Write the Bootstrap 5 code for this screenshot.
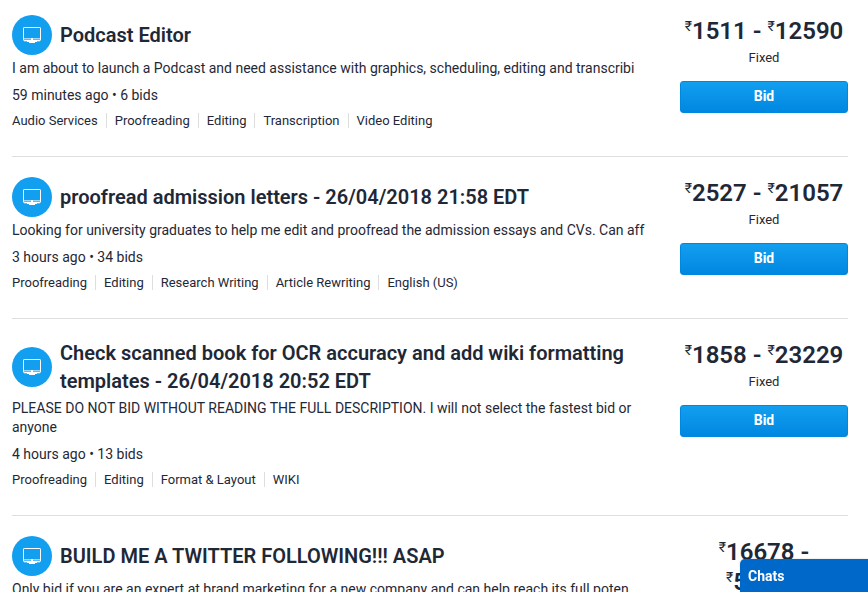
<!DOCTYPE html>
<html lang="en">
<head>
<meta charset="utf-8">
<meta name="viewport" content="width=device-width, initial-scale=1">
<title>Projects</title>
<link href="https://cdn.jsdelivr.net/npm/bootstrap@5.3.0/dist/css/bootstrap.min.css" rel="stylesheet">
<style>
body { font-family: Roboto, sans-serif; font-size: 14px; line-height: 19px; color: #1f2836; background: #fff; }
.project-list { padding: 0 20px 0 12px; margin-top: -5px; }
.project { padding: 20px 0 26px; border-bottom: 1px solid #dedede; }
.project-head { min-height: 40px; gap: 8px; margin-bottom: 4px; }
.project-icon { width: 40px; height: 40px; background: #139ff0; }
.project-title { font-size: 20px; line-height: 28px; font-weight: 600; }
.project-meta { margin: 8px 0 6px; }
.project-tags { font-size: 13px; row-gap: 4px; }
.project-tags li { line-height: 15px; margin: 2px 0; }
.project-tags li + li { border-left: 1px solid #dedede; margin-left: 8px; padding-left: 8px; }
.project-side { width: 168px; }
.project-price { font-size: 24px; line-height: 30px; font-weight: 600; margin: 1px 0 2px; }
.project-price sup { font-size: 14px; line-height: 0; top: -8px; font-weight: 400; }
.project-kind { font-size: 13px; margin-bottom: 14px; }
.btn-bid { height: 32px; padding: 0 0 2px; font-size: 14px; line-height: 20px; font-weight: 700; color: #fff; border: 1px solid #0087e0; border-radius: 3px; background: linear-gradient(#139ff0, #0087e0); }
.btn-bid:hover { color: #fff; background: #0087e0; }
.chat-bar { width: 128px; height: 33px; padding: 1px 8px 0; border: 0; border-radius: 5px 0 0 0; background: #0068c9; color: #fff; font-weight: 700; box-shadow: 0 0 2px rgba(0, 0, 0, .2); }
</style>
</head>
<body>
<svg class="d-none" xmlns="http://www.w3.org/2000/svg">
  <symbol id="monitor" viewBox="0 0 18 16">
    <rect x=".5" y=".5" width="17" height="13" rx=".6" fill="none" stroke="#fff"/>
    <path d="M1 11h16v1H1z" fill="#fff" opacity=".6"/>
    <path d="M1 12h16v1H1zM1 14h16v1H1z" fill="#fff" opacity=".3"/>
    <path d="M8 11h2v3H8zM4 14h10v1H4zM6 15h6v1H6z" fill="#fff"/>
  </symbol>
</svg>
<div class="vh-100 overflow-hidden">
<main class="overflow-hidden">
<div class="project-list">
  <article class="project d-flex justify-content-between">
    <div class="flex-grow-1 pe-4">
      <div class="project-head d-flex align-items-center">
        <span class="project-icon rounded-circle d-flex align-items-center justify-content-center flex-shrink-0"><svg width="18" height="16" aria-hidden="true"><use href="#monitor"/></svg></span>
        <h2 class="project-title mb-0">Podcast Editor</h2>
      </div>
      <p class="mb-0">I am about to launch a Podcast and need assistance with graphics, scheduling, editing and transcribi</p>
      <p class="project-meta">59 minutes ago • 6 bids</p>
      <ul class="project-tags list-unstyled d-flex flex-wrap mb-0"><li>Audio Services</li><li>Proofreading</li><li>Editing</li><li>Transcription</li><li>Video Editing</li></ul>
    </div>
    <div class="project-side flex-shrink-0 text-center">
      <p class="project-price"><sup>₹</sup>1511 - <sup>₹</sup>12590</p>
      <p class="project-kind">Fixed</p>
      <button type="button" class="btn btn-bid w-100">Bid</button>
    </div>
  </article>
  <article class="project d-flex justify-content-between">
    <div class="flex-grow-1 pe-4">
      <div class="project-head d-flex align-items-center">
        <span class="project-icon rounded-circle d-flex align-items-center justify-content-center flex-shrink-0"><svg width="18" height="16" aria-hidden="true"><use href="#monitor"/></svg></span>
        <h2 class="project-title mb-0">proofread admission letters - 26/04/2018 21:58 EDT</h2>
      </div>
      <p class="mb-0">Looking for university graduates to help me edit and proofread the admission essays and CVs. Can aff</p>
      <p class="project-meta">3 hours ago • 34 bids</p>
      <ul class="project-tags list-unstyled d-flex flex-wrap mb-0"><li>Proofreading</li><li>Editing</li><li>Research Writing</li><li>Article Rewriting</li><li>English (US)</li></ul>
    </div>
    <div class="project-side flex-shrink-0 text-center">
      <p class="project-price"><sup>₹</sup>2527 - <sup>₹</sup>21057</p>
      <p class="project-kind">Fixed</p>
      <button type="button" class="btn btn-bid w-100">Bid</button>
    </div>
  </article>
  <article class="project d-flex justify-content-between">
    <div class="flex-grow-1 pe-4">
      <div class="project-head d-flex align-items-center">
        <span class="project-icon rounded-circle d-flex align-items-center justify-content-center flex-shrink-0"><svg width="18" height="16" aria-hidden="true"><use href="#monitor"/></svg></span>
        <h2 class="project-title mb-0">Check scanned book for OCR accuracy and add wiki formatting templates - 26/04/2018 20:52 EDT</h2>
      </div>
      <p class="mb-0">PLEASE DO NOT BID WITHOUT READING THE FULL DESCRIPTION. I will not select the fastest bid or anyone</p>
      <p class="project-meta">4 hours ago • 13 bids</p>
      <ul class="project-tags list-unstyled d-flex flex-wrap mb-0"><li>Proofreading</li><li>Editing</li><li>Format &amp; Layout</li><li>WIKI</li></ul>
    </div>
    <div class="project-side flex-shrink-0 text-center">
      <p class="project-price"><sup>₹</sup>1858 - <sup>₹</sup>23229</p>
      <p class="project-kind">Fixed</p>
      <button type="button" class="btn btn-bid w-100">Bid</button>
    </div>
  </article>
  <article class="project d-flex justify-content-between">
    <div class="flex-grow-1 pe-4">
      <div class="project-head d-flex align-items-center">
        <span class="project-icon rounded-circle d-flex align-items-center justify-content-center flex-shrink-0"><svg width="18" height="16" aria-hidden="true"><use href="#monitor"/></svg></span>
        <h2 class="project-title mb-0">BUILD ME A TWITTER FOLLOWING!!! ASAP</h2>
      </div>
      <p class="mb-0">Only bid if you are an expert at brand marketing for a new company and can help reach its full poten</p>
    </div>
    <div class="project-side flex-shrink-0 text-center">
      <p class="project-price"><sup>₹</sup>16678 - <sup>₹</sup>50033</p>
    </div>
  </article>
</div>
</main>
</div>
<button type="button" class="chat-bar position-fixed bottom-0 end-0 text-start">Chats</button>
<script src="https://cdn.jsdelivr.net/npm/bootstrap@5.3.0/dist/js/bootstrap.bundle.min.js"></script>
</body>
</html>
